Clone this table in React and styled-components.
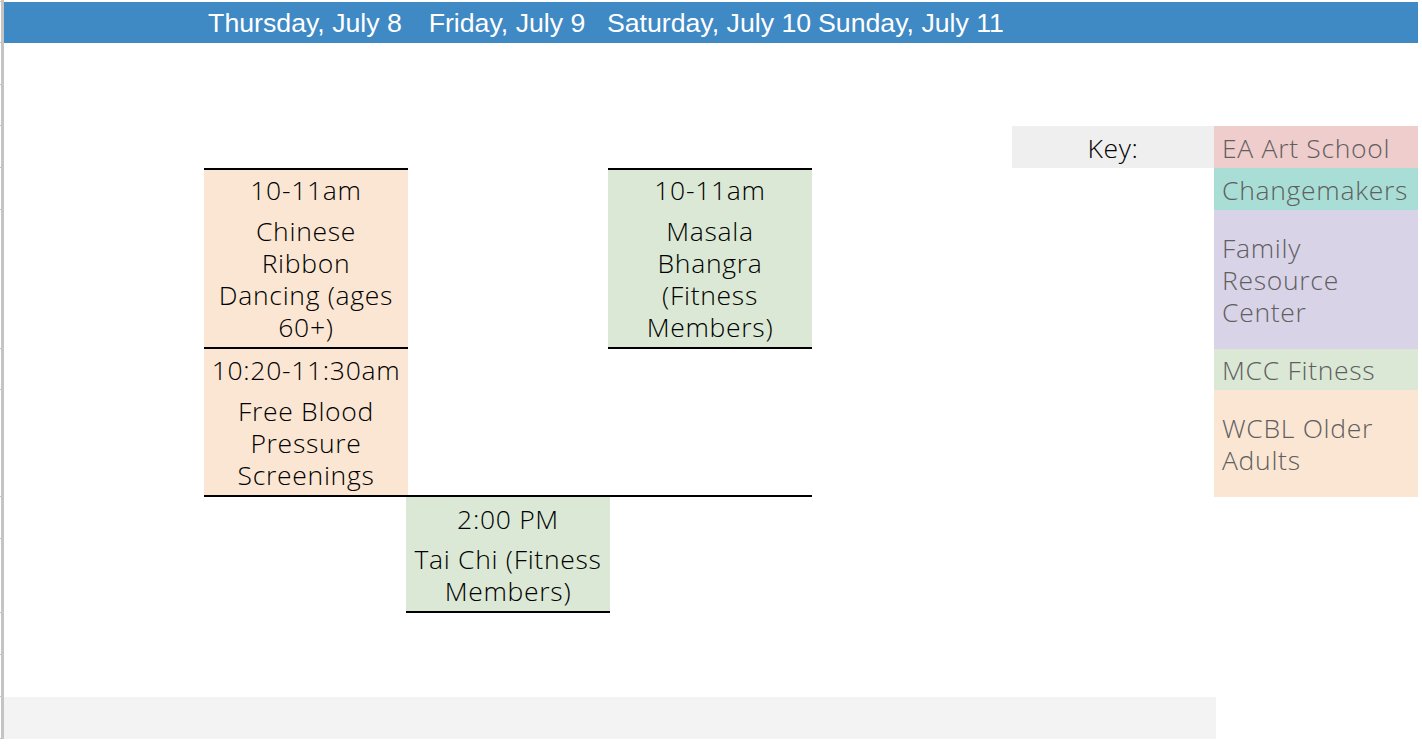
import React from "react";
import styled, { createGlobalStyle } from "styled-components";

const Global = createGlobalStyle`
  html, body { margin: 0; padding: 0; background: #ffffff; }
  body { font-family: "Open Sans", "Noto Sans", sans-serif; overflow: hidden; }
`;

const ROWS = [2, 41, 42, 41, 42, 42, 139, 41, 107, 42, 74, 42, 42, 42];

const Sheet = styled.div`
  display: grid;
  grid-template-columns: 4px 200px 202px 202px 202px 202px 202px 204px 1fr;
  grid-template-rows: ${ROWS.map((h) => h + "px").join(" ")} 1fr;
  width: 1422px;
  height: 744px;
  overflow: hidden;
`;

const RowHead = styled.div`
  grid-column: 1;
  grid-row: ${(p) => p.$row};
  box-sizing: border-box;
  border-right: 3px solid #c4c4c4;
  border-bottom: 1px solid #c4c4c4;
`;

const HeaderBand = styled.div`
  grid-column: 2 / 9;
  grid-row: 2;
  background: #3f89c4;
`;

const DayLabel = styled.div`
  grid-column: ${(p) => p.$col};
  grid-row: 2;
  display: flex;
  align-items: center;
  justify-content: center;
  white-space: nowrap;
  color: #ffffff;
  font-family: "Liberation Sans", Arial, sans-serif;
  font-size: 26.7px;
  padding-top: 1px;
  z-index: 1;
`;

const EventCell = styled.div`
  grid-column: ${(p) => p.$col};
  grid-row: ${(p) => p.$row};
  margin-right: -2px;
  box-sizing: border-box;
  background: ${(p) => p.$bg || "transparent"};
  border-top: ${(p) => (p.$top ? "2px solid #000" : "0")};
  border-bottom: ${(p) => (p.$bottom ? "2px solid #000" : "0")};
  display: flex;
  flex-direction: column;
  justify-content: flex-end;
  align-items: center;
  padding: 0 7px 4px;
  text-align: center;
  color: #000;
  font-size: 26.5px;
  font-weight: 300;
  letter-spacing: 0.7px;
  line-height: 32px;
  position: relative;
  z-index: 1;
`;

const KeyLabel = styled.div`
  grid-column: 7;
  grid-row: 5;
  background: #efefef;
  display: flex;
  align-items: flex-end;
  justify-content: center;
  padding-bottom: 4px;
  box-sizing: border-box;
  font-size: 26.5px;
  font-weight: 300;
  letter-spacing: 0.7px;
  line-height: 32px;
  color: #000;
`;

const KeyItem = styled.div`
  grid-column: 8;
  grid-row: ${(p) => p.$row};
  background: ${(p) => p.$bg};
  display: flex;
  align-items: center;
  box-sizing: border-box;
  padding: 1px 6px 0 8px;
  font-size: 26.5px;
  font-weight: 300;
  letter-spacing: 0.7px;
  line-height: 32px;
  color: #5f5f5f;
`;

const FooterBand = styled.div`
  grid-column: 2 / 8;
  grid-row: 14;
  margin-right: -2px;
  background: #f3f3f3;
`;

const ORANGE = "#fae6d3";
const GREEN = "#dbe8d5";

const days = [
  { col: 3, label: "Thursday, July 8" },
  { col: 4, label: "Friday, July 9" },
  { col: 5, label: "Saturday, July 10" },
  { col: 6, label: "Sunday, July 11" },
];

const events = [
  { col: 3, row: 6, bg: ORANGE, top: true, text: "10-11am" },
  { col: 3, row: 7, bg: ORANGE, bottom: true, text: "Chinese Ribbon Dancing (ages 60+)" },
  { col: 3, row: 8, bg: ORANGE, text: "10:20-11:30am" },
  { col: 3, row: 9, bg: ORANGE, bottom: true, text: "Free Blood Pressure Screenings" },
  { col: 4, row: 9, bottom: true, text: "" },
  { col: 5, row: 9, bottom: true, text: "" },
  { col: 4, row: 10, bg: GREEN, text: "2:00 PM" },
  { col: 4, row: 11, bg: GREEN, bottom: true, text: "Tai Chi (Fitness Members)" },
  { col: 5, row: 6, bg: GREEN, top: true, text: "10-11am" },
  { col: 5, row: 7, bg: GREEN, bottom: true, text: "Masala Bhangra (Fitness Members)" },
];

const keyItems = [
  { row: 5, bg: "#efcdcc", text: "EA Art School" },
  { row: 6, bg: "#a8ded6", text: "Changemakers" },
  { row: 7, bg: "#d9d3e8", text: "Family Resource Center" },
  { row: 8, bg: "#dbe8d5", text: "MCC Fitness" },
  { row: 9, bg: "#fae6d3", text: "WCBL Older Adults" },
];

export default function App() {
  return (
    <>
      <Global />
      <Sheet>
        {ROWS.map((_, i) => (
          <RowHead key={i} $row={i + 1} />
        ))}
        <HeaderBand />
        {days.map((d) => (
          <DayLabel key={d.label} $col={d.col}>
            {d.label}
          </DayLabel>
        ))}
        {events.map((e, i) => (
          <EventCell
            key={i}
            $col={e.col}
            $row={e.row}
            $bg={e.bg}
            $top={e.top}
            $bottom={e.bottom}
          >
            {e.text}
          </EventCell>
        ))}
        <KeyLabel>Key:</KeyLabel>
        {keyItems.map((k) => (
          <KeyItem key={k.text} $row={k.row} $bg={k.bg}>
            {k.text}
          </KeyItem>
        ))}
        <FooterBand />
      </Sheet>
    </>
  );
}
